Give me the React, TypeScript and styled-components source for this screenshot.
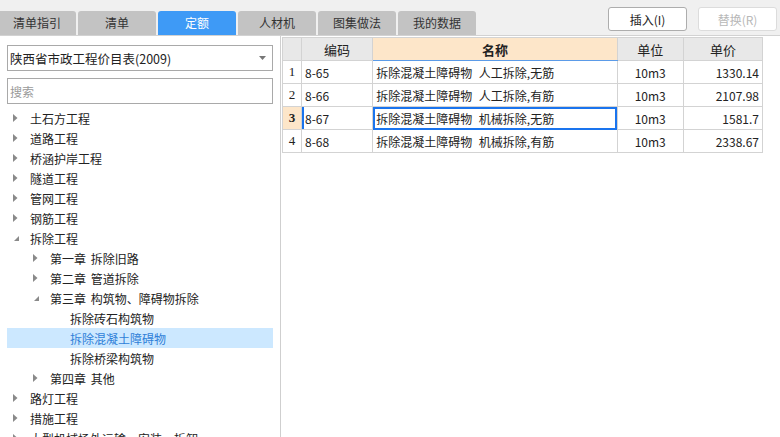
import * as React from 'react';
import styled, { createGlobalStyle } from 'styled-components';

// quota (定额) lookup panel: tab strip on top, catalogue tree on the left, quota grid on the right

const GlobalStyle = createGlobalStyle`
  html, body {
    margin: 0;
    padding: 0;
    background: #ffffff;
    overflow: hidden;
  }
  body {
    font-family: "Noto Sans CJK SC", "Noto Sans", sans-serif;
    font-size: 12px;
    color: #222;
  }
`;

const Page = styled.div`
  width: 780px;
  height: 437px;
  display: flex;
  flex-direction: column;
  overflow: hidden;
`;

const TopBar = styled.header`
  height: 35px;
  flex: none;
  display: flex;
  background: #f0f0f0;
  border-bottom: 1px solid #d2d2d2;
`;

const Tabs = styled.nav`
  display: flex;
  align-self: flex-end;
  gap: 2px;
  margin-left: -2px;
`;

const Tab = styled.div<{ $active?: boolean }>`
  width: 78px;
  height: 24px;
  line-height: 24px;
  text-align: center;
  border-radius: 3px 3px 0 0;
  background: ${p => (p.$active ? '#3e9af6' : '#c3c3c3')};
  color: ${p => (p.$active ? '#ffffff' : '#333333')};
`;

const Actions = styled.div`
  margin-left: auto;
  padding: 7px 3px 0 0;
  display: flex;
  gap: 11px;
  align-items: flex-start;
`;

const ActionButton = styled.button`
  width: 79px;
  height: 24px;
  padding: 0;
  border: 1px solid #adadad;
  border-radius: 3px;
  background: #ffffff;
  font-family: inherit;
  font-size: 12px;
  color: #222;

  &:disabled {
    border-color: #dcdcdc;
    color: #b8b8b8;
  }
`;

const Body = styled.div`
  flex: 1;
  display: flex;
  min-height: 0;
`;

const Sidebar = styled.aside`
  width: 280px;
  flex: none;
  border-right: 1px solid #cfcfcf;
  padding: 9px 0 0 0;
  display: flex;
  flex-direction: column;
  overflow: hidden;
`;

const Select = styled.div`
  flex: none;
  margin: 0 7px;
  height: 26px;
  border: 1px solid #a9a9a9;
  display: flex;
  align-items: center;
  padding: 0 6px 0 2px;
  box-sizing: border-box;
  font-size: 12.5px;
`;

const SelectText = styled.span`
  flex: 1;
`;

const Search = styled.div`
  flex: none;
  margin: 7px 7px 0;
  height: 26px;
  border: 1px solid #a9a9a9;
  box-sizing: border-box;
  display: flex;
  align-items: center;
  padding-left: 2px;
  color: #9a9a9a;
`;

const Tree = styled.ul`
  flex: none;
  list-style: none;
  margin: 4px 7px 0;
  padding: 0;
`;

const TreeRow = styled.li<{ $level: number; $selected?: boolean }>`
  height: 20px;
  display: flex;
  align-items: center;
  padding-left: ${p => 6 + p.$level * 20}px;
  white-space: nowrap;
  word-spacing: 2px;
  background: ${p => (p.$selected ? '#cce8ff' : 'transparent')};
  color: ${p => (p.$selected ? '#2f7fd8' : '#222')};
`;

const Twisty = styled.span`
  width: 17px;
  flex: none;
  display: flex;
  align-items: center;
`;

const GridPane = styled.section`
  flex: 1;
  padding: 1px 0 0 1px;
  overflow: hidden;
`;

const Grid = styled.table`
  border-collapse: collapse;
  table-layout: fixed;
  width: 481px;
  border: 1px solid #d3d3d3;
`;

const HeadCell = styled.th<{ $hot?: boolean }>`
  height: 22px;
  padding: 0;
  font-size: 13px;
  font-weight: ${p => (p.$hot ? 700 : 400)};
  background: ${p => (p.$hot ? '#fde6c9' : '#e8e8e8')};
  border: 1px solid #d3d3d3;
  border-bottom: 1px solid ${p => (p.$hot ? '#5b9be8' : '#d3d3d3')};
  color: #222;
`;

const Cell = styled.td<{ $align?: 'left' | 'center' | 'right'; $focus?: boolean; $mark?: boolean }>`
  height: 22px;
  padding: 0 3px;
  border: 1px solid #d3d3d3;
  text-align: ${p => p.$align || 'left'};
  white-space: nowrap;
  overflow: hidden;
  font-size: 12px;
  word-spacing: 4px;
  outline: ${p => (p.$focus ? '2px solid #1a74ee' : 'none')};
  outline-offset: -2px;
  box-shadow: ${p => (p.$mark ? 'inset 2px 0 0 #1a74ee' : 'none')};
`;

const RowNo = styled.td<{ $current?: boolean }>`
  height: 22px;
  padding: 0;
  border: 1px solid #d3d3d3;
  text-align: center;
  font-family: "Liberation Serif", "Noto Sans CJK SC", serif;
  font-size: 13px;
  font-weight: ${p => (p.$current ? 700 : 400)};
  background: ${p => (p.$current ? '#fde6c9' : '#ffffff')};
`;

const Collapsed = () => (
  <svg width="5" height="8" viewBox="0 0 5 8">
    <path d="M0 0 L4.5 4 L0 8 Z" fill="#8a8a8a" />
  </svg>
);

const Expanded = () => (
  <svg width="7" height="7" viewBox="0 0 7 7">
    <path d="M6 1 L6 6 L1 6 Z" fill="#8a8a8a" />
  </svg>
);

const Caret = () => (
  <svg width="7" height="4" viewBox="0 0 7 4">
    <path d="M0 0 L7 0 L3.5 4 Z" fill="#777" />
  </svg>
);

type Node = { label: string; level: number; state?: 'open' | 'closed'; selected?: boolean };

const treeNodes: Node[] = [
  { label: '土石方工程', level: 0, state: 'closed' },
  { label: '道路工程', level: 0, state: 'closed' },
  { label: '桥涵护岸工程', level: 0, state: 'closed' },
  { label: '隧道工程', level: 0, state: 'closed' },
  { label: '管网工程', level: 0, state: 'closed' },
  { label: '钢筋工程', level: 0, state: 'closed' },
  { label: '拆除工程', level: 0, state: 'open' },
  { label: '第一章 拆除旧路', level: 1, state: 'closed' },
  { label: '第二章 管道拆除', level: 1, state: 'closed' },
  { label: '第三章 构筑物、障碍物拆除', level: 1, state: 'open' },
  { label: '拆除砖石构筑物', level: 2 },
  { label: '拆除混凝土障碍物', level: 2, selected: true },
  { label: '拆除桥梁构筑物', level: 2 },
  { label: '第四章 其他', level: 1, state: 'closed' },
  { label: '路灯工程', level: 0, state: 'closed' },
  { label: '措施工程', level: 0, state: 'closed' },
  { label: '大型机械场外运输、安装、拆卸', level: 0, state: 'closed' },
];

const quotas = [
  { code: '8-65', name: '拆除混凝土障碍物 人工拆除,无筋', unit: '10m3', price: '1330.14' },
  { code: '8-66', name: '拆除混凝土障碍物 人工拆除,有筋', unit: '10m3', price: '2107.98' },
  { code: '8-67', name: '拆除混凝土障碍物 机械拆除,无筋', unit: '10m3', price: '1581.7' },
  { code: '8-68', name: '拆除混凝土障碍物 机械拆除,有筋', unit: '10m3', price: '2338.67' },
];

const tabs = ['清单指引', '清单', '定额', '人材机', '图集做法', '我的数据'];

const App = () => {
  const currentRow = 2;
  return (
    <Page>
      <GlobalStyle />
      <TopBar>
        <Tabs>
          {tabs.map(t => (
            <Tab key={t} $active={t === '定额'}>{t}</Tab>
          ))}
        </Tabs>
        <Actions>
          <ActionButton>插入(I)</ActionButton>
          <ActionButton disabled>替换(R)</ActionButton>
        </Actions>
      </TopBar>
      <Body>
        <Sidebar>
          <Select>
            <SelectText>陕西省市政工程价目表(2009)</SelectText>
            <Caret />
          </Select>
          <Search>搜索</Search>
          <Tree>
            {treeNodes.map(n => (
              <TreeRow key={n.label} $level={n.level} $selected={n.selected}>
                <Twisty>
                  {n.state === 'closed' && <Collapsed />}
                  {n.state === 'open' && <Expanded />}
                </Twisty>
                {n.label}
              </TreeRow>
            ))}
          </Tree>
        </Sidebar>
        <GridPane>
          <Grid>
            <colgroup>
              <col style={{ width: 19 }} />
              <col style={{ width: 71 }} />
              <col style={{ width: 244 }} />
              <col style={{ width: 66 }} />
              <col style={{ width: 79 }} />
            </colgroup>
            <thead>
              <tr>
                <HeadCell />
                <HeadCell>编码</HeadCell>
                <HeadCell $hot>名称</HeadCell>
                <HeadCell>单位</HeadCell>
                <HeadCell>单价</HeadCell>
              </tr>
            </thead>
            <tbody>
              {quotas.map((q, i) => (
                <tr key={q.code}>
                  <RowNo $current={i === currentRow}>{i + 1}</RowNo>
                  <Cell $mark={i === currentRow}>{q.code}</Cell>
                  <Cell $focus={i === currentRow}>{q.name}</Cell>
                  <Cell $align="center">{q.unit}</Cell>
                  <Cell $align="right">{q.price}</Cell>
                </tr>
              ))}
            </tbody>
          </Grid>
        </GridPane>
      </Body>
    </Page>
  );
};

export default App;
